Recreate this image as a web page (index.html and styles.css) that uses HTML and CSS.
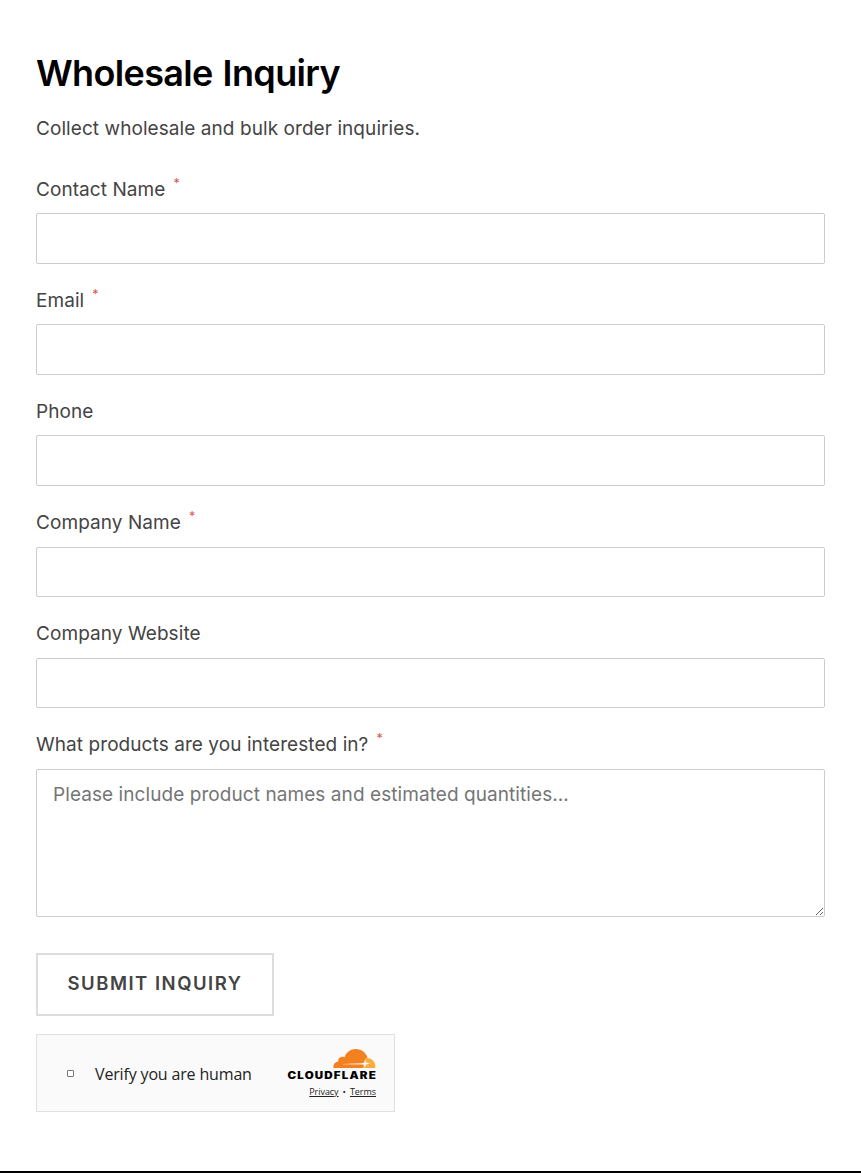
FILE: index.html
```html
<!DOCTYPE html>
<html lang="en">
<head>
    <meta charset="UTF-8">
    <meta name="viewport" content="width=device-width, initial-scale=1.0">
    <title>Wholesale Inquiry</title>
    <link rel="stylesheet" href="styles.css">
</head>
<body>
    <div class="container">
        <h1>Wholesale Inquiry</h1>
        <p class="description">Collect wholesale and bulk order inquiries.</p>
        <form>
            <div class="form-field">
                <label for="name">Contact Name<span class="required">*</span></label>
                <input type="text" id="name">
            </div>
            <div class="form-field">
                <label for="email">Email<span class="required">*</span></label>
                <input type="email" id="email">
            </div>
            <div class="form-field">
                <label for="phone">Phone</label>
                <input type="tel" id="phone">
            </div>
            <div class="form-field">
                <label for="company">Company Name<span class="required">*</span></label>
                <input type="text" id="company">
            </div>
            <div class="form-field">
                <label for="website">Company Website</label>
                <input type="url" id="website">
            </div>
            <div class="form-field">
                <label for="products">What products are you interested in?<span class="required">*</span></label>
                <textarea id="products" placeholder="Please include product names and estimated quantities..."></textarea>
            </div>
            <button type="submit" class="submit-button">Submit Inquiry</button>
            <!-- Human verification -->
            <div class="captcha">
                <input type="checkbox" id="human" class="captcha-check">
                <label for="human" class="captcha-label">Verify you are human</label>
                <div class="captcha-brand">
                    <svg class="cloud" width="43" height="20" viewBox="0 0 43 20">
                        <path fill="#f48120" d="M0.5 19C0 15.5 2 12.8 5.2 12.5C4.7 9.2 8.2 6.6 11.5 8.2C13.2 3.3 17.7 0 22.8 0C28.7 0 33.5 4 34.7 9.5L32 19Z"/>
                        <path fill="#faae40" d="M32.5 9C38.7 8.2 42.8 12.6 42.3 19H29.5Z"/>
                        <path fill="#fafafa" d="M10 14.9L29 14.2L31.1 13.6L32 10.5L33.2 13.5L37 14.5L33.1 15.6L31.8 18.8L30.5 15.6L10 15.3Z"/>
                    </svg>
                    <svg class="wordmark" width="92" height="12" viewBox="0 0 92 12">
                        <text x="3.5" y="9" textLength="89.5" lengthAdjust="spacingAndGlyphs">CLOUDFLARE</text>
                    </svg>
                    <div class="captcha-links">
                        <a href="#">Privacy</a><span class="dot">•</span><a href="#">Terms</a>
                    </div>
                </div>
            </div>
        </form>
    </div>
</body>
</html>
```
FILE: styles.css
```css
/* General styles */
* {
    box-sizing: border-box;
}
body {
    font-family: Inter, Arial, sans-serif;
    font-size: 19px;
    line-height: 24px;
    letter-spacing: 0.07px;
    color: #444;
    margin: 0;
    background-color: #fff;
}
.container {
    height: 1173px;
    padding: 49px 36px 0;
    border-bottom: 2px solid #000;
}
h1 {
    margin: 0;
    font-size: 36px;
    font-weight: 600;
    line-height: 48px;
    letter-spacing: -0.65px;
    word-spacing: 1.5px;
    color: #000;
}
.description {
    margin: 20px 0 36px;
}
/* Form styles */
.form-field {
    margin-bottom: 24.6px;
}
.form-field label {
    display: block;
    margin-bottom: 11.4px;
    padding-top: 0.6px;
}
.required {
    margin-left: 8px;
    font-size: 12.5px;
    line-height: 0;
    vertical-align: 8px;
    color: #d9534f;
}
.form-field input, .form-field textarea {
    display: block;
    width: 100%;
    height: 50.6px;
    padding: 13px 16px 12px;
    border: 1px solid #ccc;
    border-radius: 2px;
    background-color: #fff;
    font: inherit;
    letter-spacing: inherit;
}
.form-field textarea {
    height: 148px;
    margin-bottom: 36px;
    resize: vertical;
}
.form-field textarea::placeholder {
    color: #757575;
}
.submit-button {
    display: block;
    width: 238px;
    height: 63px;
    padding: 0 0 3px;
    border: 2px solid #ddd;
    background-color: #fff;
    color: #444;
    font-family: inherit;
    font-size: 18.5px;
    font-weight: 600;
    letter-spacing: 1.5px;
    text-transform: uppercase;
    cursor: pointer;
}
/* Captcha styles */
.captcha {
    display: flex;
    align-items: center;
    width: 359px;
    height: 78px;
    margin-top: 18px;
    padding: 1px 18px 0 30px;
    border: 1px solid #e0e0e0;
    background-color: #fafafa;
    color: #232323;
    font-family: "Open Sans", "Noto Sans", sans-serif;
    letter-spacing: 0;
}
.captcha-check {
    appearance: none;
    width: 7px;
    height: 7px;
    margin: 0 21px 0 0;
    border: 1px solid #777;
    border-radius: 1px;
    background-color: #fff;
}
.captcha-label {
    padding-top: 1px;
    font-size: 16px;
    letter-spacing: -0.16px;
}
.captcha-brand {
    display: flex;
    flex-direction: column;
    align-items: flex-end;
    margin-left: auto;
}
.wordmark {
    margin-top: 1px;
}
.wordmark text {
    font-family: Inter, sans-serif;
    font-size: 9.8px;
    font-weight: 900;
    letter-spacing: 1px;
    fill: #000;
}
.captcha-links {
    display: flex;
    margin-top: 4px;
    font-size: 9px;
    line-height: 12px;
    letter-spacing: -0.05px;
}
.captcha-links a {
    color: #232323;
}
.dot {
    margin: 0 4px;
}
```
